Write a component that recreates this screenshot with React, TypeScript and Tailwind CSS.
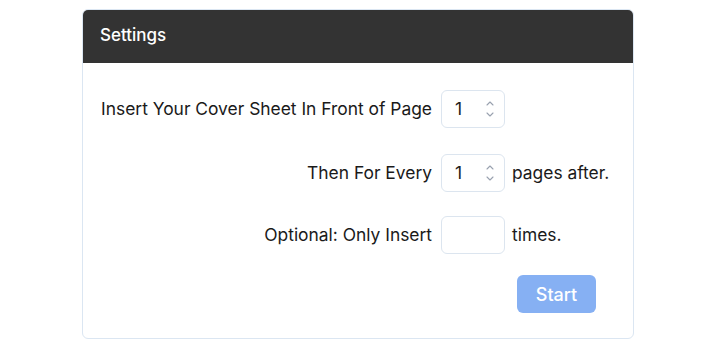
import React from 'react';

const Spinner: React.FC = () => (
    <svg width="8" height="18" viewBox="0 0 8 18" className="text-gray-400">
        <path d="M1 5 L4 2 L7 5" fill="none" stroke="currentColor" strokeWidth="1.1" strokeLinecap="round" strokeLinejoin="round" />
        <path d="M1 13 L4 16 L7 13" fill="none" stroke="currentColor" strokeWidth="1.1" strokeLinecap="round" strokeLinejoin="round" />
    </svg>
);

const NumberBox: React.FC<{ value?: string }> = ({ value }) => (
    <div className="w-[64px] h-[38px] rounded-[6px] border border-[#dce5ef] bg-white flex items-center pl-[13px] pr-[10px]">
        <span className="flex-1 text-[17.5px] text-[#1f1f1f]">{value}</span>
        {value && <Spinner />}
    </div>
);

export default function App() {
    return (
        <div className="w-[720px] h-[348px] bg-white pt-[9px]" style={{ fontFamily: 'Inter, "Noto Sans", sans-serif' }}>
            <div className="ml-[82px] w-[552px] h-[330px] rounded-[6px] border border-[#dbe6f2] overflow-hidden">
                <div className="h-[54px] bg-[#333333] flex items-center pl-[18px] -mx-px -mt-px">
                    <span className="text-white text-[17px] font-medium">Settings</span>
                </div>
                <div className="pt-[27px] pl-[18px] grid grid-cols-[331px_64px_auto] gap-x-[9px] items-center text-[17.4px] text-[#1a1a1a]">
                    <span className="text-right whitespace-nowrap">Insert Your Cover Sheet In Front of Page</span>
                    <NumberBox value="1" />
                    <span></span>

                    <span className="text-right mt-[26px]">Then For Every</span>
                    <div className="mt-[26px]"><NumberBox value="1" /></div>
                    <span className="mt-[26px] -ml-[2px]">pages after.</span>

                    <span className="text-right mt-[24px]">Optional: Only Insert</span>
                    <div className="mt-[24px]"><NumberBox /></div>
                    <span className="mt-[24px] -ml-[2px]">times.</span>

                    <span></span>
                    <span></span>
                    <div className="mt-[21px]">
                        <button className="ml-[3px] w-[79px] h-[38px] rounded-[6px] bg-[#86b0f3] text-white text-[18px] font-medium">
                            Start
                        </button>
                    </div>
                </div>
            </div>
        </div>
    );
}
